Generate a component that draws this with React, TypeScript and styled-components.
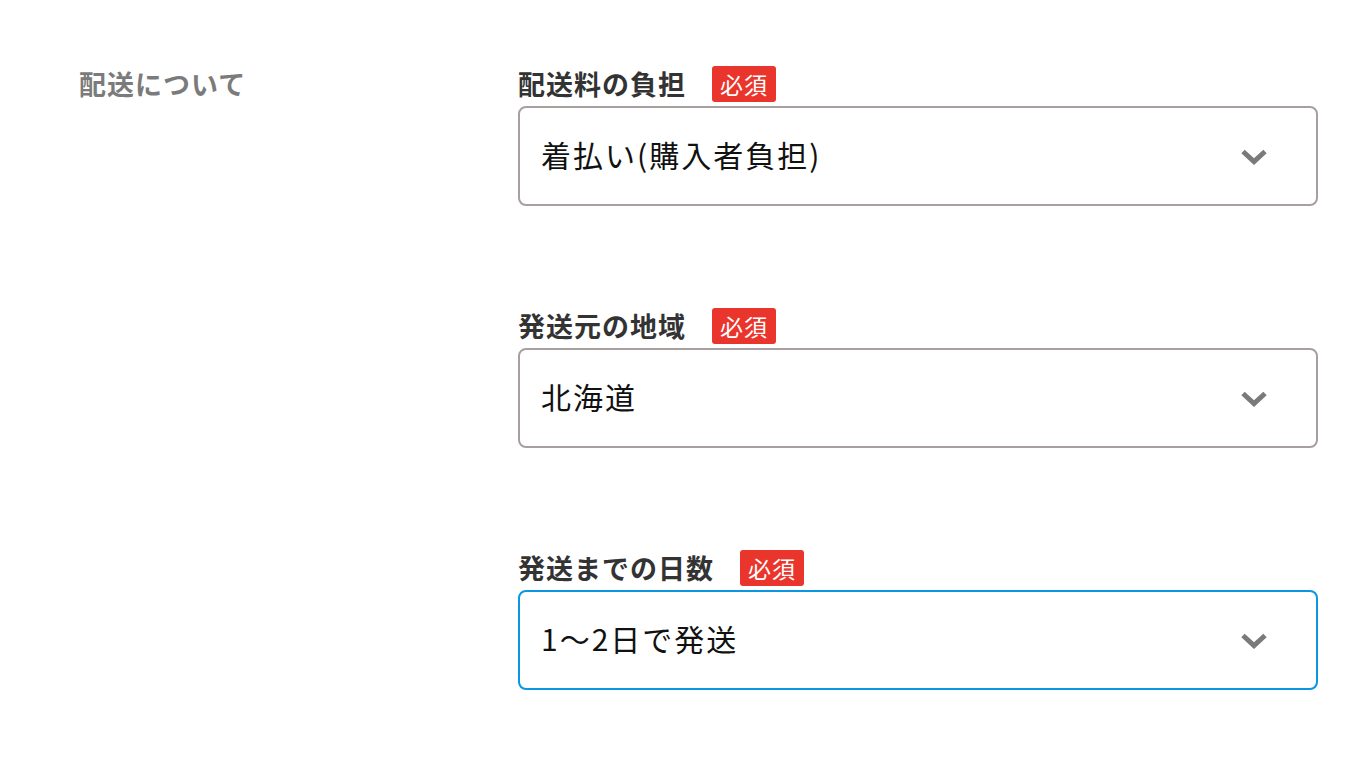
import React from "react";
import styled, { createGlobalStyle } from "styled-components";

const Global = createGlobalStyle`
  html, body { margin: 0; padding: 0; background: #fff; }
  body { font-family: "Noto Sans CJK JP", "Noto Sans", sans-serif; }
`;

const Page = styled.div`
  display: grid;
  grid-template-columns: 439px 800px;
  padding: 66px 0 0 79px;
`;

const SectionTitle = styled.h2`
  margin: 0;
  font-size: 27px;
  line-height: 36px;
  font-weight: 700;
  letter-spacing: 1px;
  color: #7b7b7b;
`;

const Fields = styled.div`
  display: flex;
  flex-direction: column;
  gap: 102px;
`;

const Field = styled.div`
  display: flex;
  flex-direction: column;
  gap: 4px;
`;

const LabelRow = styled.div`
  display: flex;
  align-items: center;
  height: 36px;
`;

const Label = styled.label`
  font-size: 27px;
  line-height: 36px;
  font-weight: 700;
  letter-spacing: 1px;
  color: #333;
`;

const Badge = styled.span`
  margin-left: 26px;
  width: 64px;
  height: 36px;
  border-radius: 3px;
  background: #ea352d;
  color: #fff;
  font-size: 23px;
  line-height: 36px;
  text-align: center;
  letter-spacing: 1px;
`;

const SelectWrap = styled.div`
  position: relative;
  height: 100px;
`;

const Select = styled.select<{ $focused?: boolean }>`
  appearance: none;
  -webkit-appearance: none;
  box-sizing: border-box;
  width: 100%;
  height: 100%;
  margin: 0;
  padding: 0 80px 4px 21px;
  border: 2px solid ${(p) => (p.$focused ? "#0a96e0" : "#a89f9f")};
  border-radius: 8px;
  background: #fff;
  font-family: "Noto Sans CJK JP", "Noto Sans", sans-serif;
  font-size: 30px;
  letter-spacing: 2px;
  color: #111;
  outline: none;
`;

const Chevron = styled.svg`
  position: absolute;
  right: 50px;
  top: 50%;
  margin-top: -7px;
  width: 28px;
  height: 16px;
  pointer-events: none;
`;

type FieldDef = { label: string; value: string; options: string[]; focused?: boolean };

const fields: FieldDef[] = [
  {
    label: "配送料の負担",
    value: "着払い(購入者負担)",
    options: ["送料込み(出品者負担)", "着払い(購入者負担)"],
  },
  {
    label: "発送元の地域",
    value: "北海道",
    options: ["北海道", "青森県", "岩手県"],
  },
  {
    label: "発送までの日数",
    value: "1〜2日で発送",
    options: ["1〜2日で発送", "2〜3日で発送", "4〜7日で発送"],
    focused: true,
  },
];

export default function App() {
  return (
    <>
      <Global />
      <Page>
        <SectionTitle>配送について</SectionTitle>
        <Fields>
          {fields.map((f) => (
            <Field key={f.label}>
              <LabelRow>
                <Label>{f.label}</Label>
                <Badge>必須</Badge>
              </LabelRow>
              <SelectWrap>
                <Select $focused={f.focused} defaultValue={f.value}>
                  {f.options.map((o) => (
                    <option key={o} value={o}>
                      {o}
                    </option>
                  ))}
                </Select>
                <Chevron viewBox="0 0 28 16">
                  <polyline
                    points="3,2.5 14,12.5 25,2.5"
                    fill="none"
                    stroke="#7a7a7a"
                    strokeWidth="5"
                    strokeLinejoin="miter"
                  />
                </Chevron>
              </SelectWrap>
            </Field>
          ))}
        </Fields>
      </Page>
    </>
  );
}
